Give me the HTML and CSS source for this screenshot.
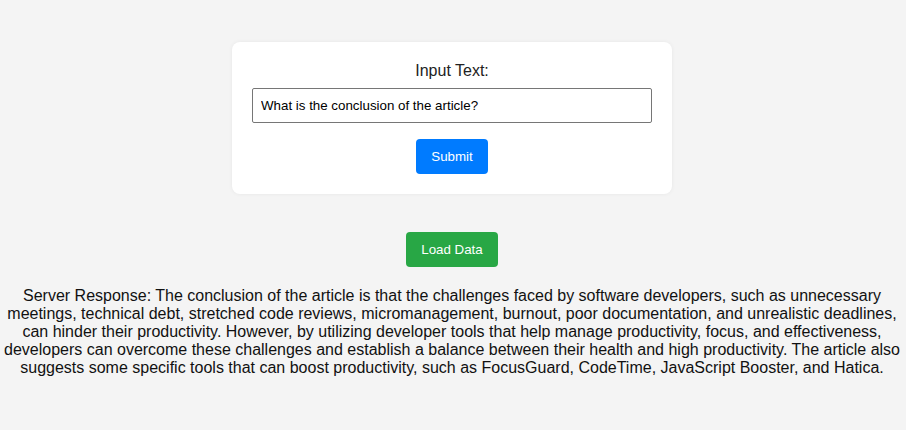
FILE: index.html
```html
<!DOCTYPE html>
<html>
<head>
<meta charset="utf-8">
<link rel="stylesheet" href="styles.css">
</head>
<body>
<div class="page">
  <div class="card">
    <label class="label" for="q">Input Text:</label>
    <input class="input" id="q" type="text" value="What is the conclusion of the article?">
    <button class="btn btn-blue">Submit</button>
  </div>
  <button class="btn btn-green load">Load Data</button>
  <p class="response">Server Response: The conclusion of the article is that the challenges faced by software developers, such as unnecessary meetings, technical debt, stretched code reviews, micromanagement, burnout, poor documentation, and unrealistic deadlines, can hinder their productivity. However, by utilizing developer tools that help manage productivity, focus, and effectiveness, developers can overcome these challenges and establish a balance between their health and high productivity. The article also suggests some specific tools that can boost productivity, such as FocusGuard, CodeTime, JavaScript Booster, and Hatica.</p>
</div>
</body>
</html>
```
FILE: styles.css
```css
html, body {
  margin: 0;
  padding: 0;
  background: #f4f4f4;
  font-family: "Liberation Sans", Arial, sans-serif;
  color: #000;
}
.page {
  display: flex;
  flex-direction: column;
  align-items: center;
  padding: 42px 2px 0 0;
}
.card {
  width: 440px;
  box-sizing: border-box;
  background: #fff;
  border-radius: 8px;
  box-shadow: 0 0 4px rgba(0,0,0,0.06);
  padding: 20px;
  display: flex;
  flex-direction: column;
  align-items: center;
}
.label {
  font-size: 16px;
  line-height: 18px;
  color: #222;
}
.input {
  margin-top: 8px;
  width: 400px;
  height: 35px;
  box-sizing: border-box;
  padding: 0 8px;
  border: 1px solid #767676;
  border-radius: 2px;
  font-family: "Liberation Sans", Arial, sans-serif;
  font-size: 13.33px;
  color: #000;
  background: #fff;
}
.btn {
  border: none;
  border-radius: 4px;
  color: #fff;
  font-family: "Liberation Sans", Arial, sans-serif;
  font-size: 13.33px;
  line-height: 15px;
  padding: 10px 15px;
  cursor: pointer;
}
.btn-blue {
  margin-top: 16px;
  background: #007bff;
}
.btn-green {
  background: #28a745;
}
.load {
  margin-top: 38px;
}
.response {
  margin: 20px 0 0;
  text-align: center;
  font-size: 16px;
  line-height: 18px;
  color: #111;
}
```
